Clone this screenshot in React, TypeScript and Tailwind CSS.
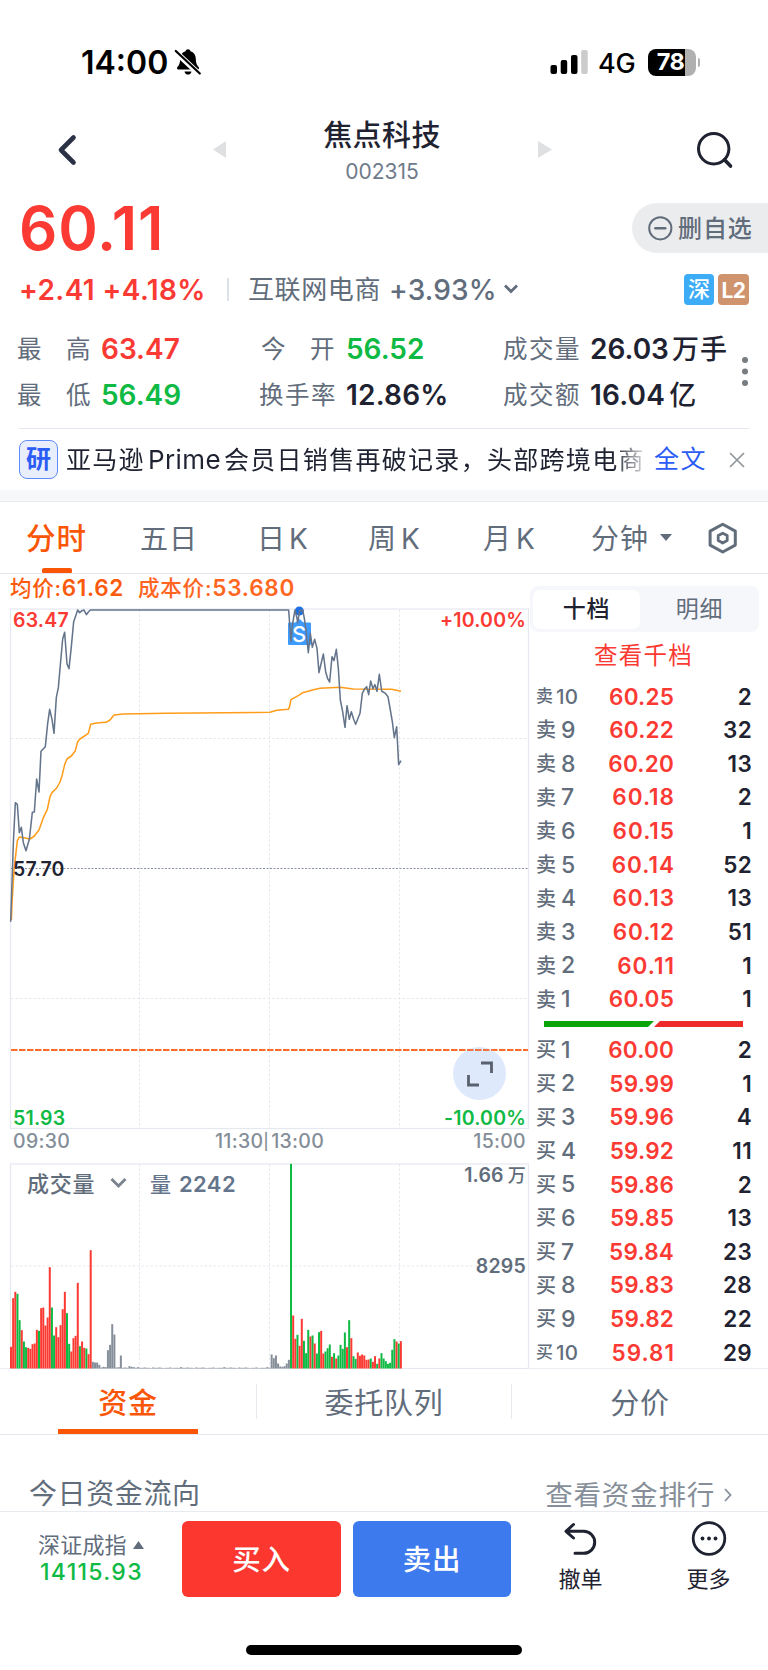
import React from "react";

type Tone = "r" | "g" | "n";

const toneFill: Record<Tone, string> = { r: "#fb3a33", g: "#0fba44", n: "#868f99" };

const openingBars =
  "65r 211r 230r 224g 145g 115r 81g 64g 62r 59r 73r 75r 116r 113g 181r 183r 129r 153r 304r 183g 99g 124r 94r 130r 178r 230r 166g 74g 51r 91r 98r 257r 67g 81r 62r 60g 43r 355r 20n 18n 18n 11n 3n 5n 4n 55n 71n 133n 102n 3n 4n 39n 2n 3n 2n 7n 5n 4n 2n 4n 2n";
const flatBars = "2n 3n 2n 2n 1n 3n 2n 2n 3n 2n 1n 2n 2n 3n 1n 2n 2n 2n 4n 2n";
const afternoonBars =
  "42n 31n 39n 15n 6n 5n 7n 15n 26n 614g 159r 89r 101g 68r 149r 83g 46g 116g 96r 99g 75r 45g 109g 113r 45r 51g 61g 72g 35r 46g 30r 39g 71g 59g 108g 64r 145g 91r 37g 29g 48r 38r 42r 39r 26r 27r 30g 20r 37r 14g 30r 46g 30g 22g 14g 17g 56g 88g 81r 75g 82r";

const bars = [openingBars, flatBars, flatBars, flatBars, afternoonBars]
  .join(" ")
  .split(" ")
  .map((b) => ({ h: parseInt(b, 10) / 3, tone: b.slice(-1) as Tone }));

const pricePoints =
  "32,995 40,760 46,638 52,643 58,728 64,712 70,758 78,782 88,748 97,667 103,666 110,567 117,606 123,484 136,470 143,400 149,358 156,388 162,430 169,322 175,293 181,225 188,147 194,127 201,222 207,236 214,170 221,95 227,78 233,60 239,68 246,62 252,60 259,74 265,66 271,60 866,60 873,155 878,100 885,60 891,85 893,98 899,62 908,60 913,85 918,120 925,188 931,130 937,172 944,148 951,175 957,248 970,192 977,245 983,266 989,276 996,200 1002,212 1009,178 1015,235 1021,330 1028,365 1035,412 1041,347 1048,388 1054,365 1061,388 1067,403 1080,370 1087,310 1093,298 1100,290 1106,314 1112,273 1119,296 1125,284 1131,304 1138,253 1145,303 1157,311 1164,320 1171,360 1177,395 1183,443 1190,410 1196,524 1203,512";
const averagePoints =
  "34,990 36,940 42,840 52,752 58,741 75,744 90,747 103,738 117,720 130,683 142,658 150,620 156,608 170,594 180,576 187,554 194,524 201,507 214,498 226,482 233,455 240,447 265,430 272,403 290,399 318,397 330,390 342,375 370,372 500,370 810,367 830,361 865,358 868,352 873,329 900,314 908,308 940,299 960,295 1020,292 1060,297 1175,298 1203,304";

const sells: [string, string, string][] = [
  ["10", "60.25", "2"],
  ["9", "60.22", "32"],
  ["8", "60.20", "13"],
  ["7", "60.18", "2"],
  ["6", "60.15", "1"],
  ["5", "60.14", "52"],
  ["4", "60.13", "13"],
  ["3", "60.12", "51"],
  ["2", "60.11", "1"],
  ["1", "60.05", "1"],
];
const buys: [string, string, string][] = [
  ["1", "60.00", "2"],
  ["2", "59.99", "1"],
  ["3", "59.96", "4"],
  ["4", "59.92", "11"],
  ["5", "59.86", "2"],
  ["6", "59.85", "13"],
  ["7", "59.84", "23"],
  ["8", "59.83", "28"],
  ["9", "59.82", "22"],
  ["10", "59.81", "29"],
];

function StatusBar() {
  return (
    <div className="flex h-[124px] items-center pl-[81px] text-black">
      <span className="w-[93px] pt-[2px] text-[32px] font-semibold">14:00</span>
      <svg className="h-[28px] w-[28px]" viewBox="0 0 28 28">
        <path
          d="M14 1.200c1.300 0 2.200.8 2.500 2 3.400 1 5.300 3.800 5.300 7.600 0 4.500 1.300 6.700 2.800 8.200.9.900.4 2.400-.9 2.400H4.300c-1.300 0-1.800-1.500-.9-2.400C4.900 17.500 6.200 15.300 6.200 10.800c0-3.800 1.900-6.600 5.300-7.600.3-1.200 1.200-2 2.500-2z"
          fill="#000"
        />
        <path d="M10.500 23.400h7c-.3 2-1.700 3.200-3.500 3.200s-3.200-1.200-3.500-3.200z" fill="#000" />
        <path d="M1.200 3.500l24 22.500" stroke="#fff" strokeWidth="5.600" />
        <path d="M1.800 3l24 22.500" stroke="#000" strokeWidth="2.200" strokeLinecap="round" />
      </svg>
      <svg className="ml-[348px] h-[26px] w-[40px]" viewBox="0 0 40 26">
        <rect x="0.500" y="16" width="6.500" height="9" rx="2" />
        <rect x="10.700" y="11" width="6.500" height="14" rx="2" />
        <rect x="21" y="6" width="6.500" height="19" rx="2" />
        <rect x="31.200" y="1" width="6.500" height="24" rx="2" fill="#cbcbcb" />
      </svg>
      <span className="ml-[8px] w-[50px] pt-[3px] text-[27px] font-medium tracking-[-0.300px]">4G</span>
      <div className="flex h-[27px] w-[48px] items-center justify-center rounded-[8px] bg-[linear-gradient(90deg,#000_78%,#b0b0b0_78%)] pr-[3px] text-[23.500px] font-bold tracking-[-0.500px] text-white">
        78
      </div>
      <div className="ml-[2px] h-[9px] w-[2px] rounded-r-full bg-[#b0b0b0]" />
    </div>
  );
}

function Header() {
  return (
    <div className="flex h-[76px] items-start">
      <svg className="ml-[55px] mt-[8px] h-[36px] w-[26px]" viewBox="0 0 26 36" fill="none">
        <path d="M18.500 5.500L6 18l12.500 12.500" stroke="#2b3245" strokeWidth="4.600" strokeLinecap="round" strokeLinejoin="round" />
      </svg>
      <svg className="ml-[132px] mt-[17px] h-[17px] w-[13px]" viewBox="0 0 13 17">
        <path d="M13 0v17L0 8.500z" fill="#dfe0e2" />
      </svg>
      <div className="flex w-[312px] flex-col items-center">
        <span className="mt-[-3px] h-[29px] text-[29px] font-medium leading-[29px] tracking-[0.400px] text-[#1f2331]">焦点科技</span>
        <span className="mt-[11px] text-[21px] leading-[22px] text-[#6f7b8b]">002315</span>
      </div>
      <svg className="mt-[17px] h-[17px] w-[14px]" viewBox="0 0 14 17">
        <path d="M0 0v17L14 8.500z" fill="#dfe0e2" />
      </svg>
      <svg className="ml-[143px] mt-[6px] h-[40px] w-[40px]" viewBox="0 0 40 40" fill="none" stroke="#1f2331" strokeWidth="3">
        <circle cx="18.700" cy="18.700" r="15.200" />
        <path d="M29.500 29.800l6 6.300" strokeWidth="3.600" strokeLinecap="round" />
      </svg>
    </div>
  );
}

function Quote() {
  return (
    <div>
      <div className="flex h-[56px] items-center justify-between pl-[19px]">
        <span className="text-[60px] font-semibold leading-none tracking-[0.900px] text-[#fb3a33]">60.11</span>
        <div className="flex h-[50px] w-[136px] items-center rounded-l-full bg-[#ebecee] pl-[16px]">
          <svg className="h-[25px] w-[25px]" viewBox="0 0 25 25" fill="none" stroke="#626d7c" strokeWidth="2">
            <circle cx="12.300" cy="12.300" r="11.100" />
            <path d="M7.300 12.300h10" strokeWidth="2.400" strokeLinecap="round" />
          </svg>
          <span className="ml-[5px] whitespace-nowrap pt-[2px] text-[24px] font-medium tracking-[0.900px] text-[#626d7c]">删自选</span>
        </div>
      </div>
      <div className="flex h-[66px] items-center pl-[19px] text-[28px] font-medium text-[#626d7c]">
        <span className="w-[208px] whitespace-nowrap pt-[1px] font-semibold tracking-[0.400px] text-[#fb3a33]">+2.41 +4.18%</span>
        <span className="h-[23px] w-[2px] bg-[#dde1e8]" />
        <span className="ml-[19px] w-[141px] whitespace-nowrap pt-[1px] text-[26px] font-normal tracking-[0.600px]">互联网电商</span>
        <span className="w-[114px] pt-[1px] tracking-[0.200px]">+3.93%</span>
        <svg className="h-[12px] w-[16px]" viewBox="0 0 16 12" fill="none">
          <path d="M2 2.500l6 6 6-6" stroke="#626d7c" strokeWidth="2.800" />
        </svg>
        <span className="ml-[165px] flex h-[31px] w-[30px] items-center justify-center rounded-[4px] bg-[#3dacf7] text-[22px] text-white">深</span>
        <span className="ml-[4px] flex h-[31px] w-[31px] items-center justify-center rounded-[4px] bg-[#cf936d] pt-[2px] text-[21px] font-bold tracking-[-0.500px] text-white">L2</span>
      </div>
      <div className="flex h-[106px] pl-[17px]">
        <div className="grid w-[727px] grid-cols-[84px_158px_87px_157px_87px_154px] grid-rows-[46px_46px] pt-[4px] text-[28px] font-semibold text-[#1f2331] [&>span]:flex [&>span]:items-center [&>span]:whitespace-nowrap">
          <Label spaced>最　高</Label>
          <span className="text-[#fb3a33]">63.47</span>
          <Label spaced>
            <i className="pl-[2px] not-italic">今　开</i>
          </Label>
          <span className="text-[#0fba44]">56.52</span>
          <Label>成交量</Label>
          <span>
            26.03<i className="ml-[3px] text-[27px] font-medium not-italic tracking-[1.200px]">万手</i>
          </span>
          <Label spaced>最　低</Label>
          <span className="text-[#0fba44]">56.49</span>
          <Label>换手率</Label>
          <span className="tracking-[0.200px]">12.86%</span>
          <Label>成交额</Label>
          <span className="tracking-[0.200px]">
            16.04<i className="ml-[4px] text-[27px] font-medium not-italic">亿</i>
          </span>
        </div>
        <svg className="mt-[34px] h-[34px] w-[6px] shrink-0" viewBox="0 0 6 34" fill="#777c80" overflow="visible">
          <circle cx="1" cy="4" r="3" />
          <circle cx="1" cy="15.500" r="3" />
          <circle cx="1" cy="27" r="3" />
        </svg>
      </div>
    </div>
  );
}

function Label({ children, spaced }: { children: React.ReactNode; spaced?: boolean }) {
  return (
    <span className={spaced ? "text-[24.500px] font-normal text-[#626d7c]" : "text-[24.500px] font-normal tracking-[1.500px] text-[#626d7c]"}>
      {children}
    </span>
  );
}

function News() {
  return (
    <div>
      <div className="mx-[19px] h-px bg-[#e6e9f0]" />
      <div className="flex h-[61px] items-center pl-[19px]">
        <span className="flex h-[39px] w-[39px] items-center justify-center rounded-[8px] border border-[#5e8bf7] bg-[#e9eefd] text-[25px] font-bold text-[#2b5cf6]">研</span>
        <span className="ml-[8px] w-[580px] overflow-hidden whitespace-nowrap text-[25px] leading-[36px] tracking-[1.300px] text-[#1f2331] [mask-image:linear-gradient(90deg,#000_548px,transparent_584px)]">
          亚马逊<i className="ml-[3px] mr-[3px] text-[26px] not-italic tracking-[0.400px]">Prime</i>会员日销售再破记录，头部跨境电商
        </span>
        <span className="ml-[8px] w-[75px] text-[25px] tracking-[1.500px] text-[#2b5cf6]">全文</span>
        <svg className="h-[16px] w-[16px]" viewBox="0 0 16 16">
          <path d="M1 1l14 14M15 1L1 15" stroke="#8f9499" strokeWidth="1.600" />
        </svg>
      </div>
      <div className="h-[12px] border-b border-[#e9ebf0] bg-[#f7f8fa]" />
    </div>
  );
}

function PeriodTabs() {
  return (
    <div className="flex h-[72px] border-b border-[#e3e6ee] text-[28px] tracking-[1px] text-[#626d7c] [&>span]:flex [&>span]:items-center [&>span]:whitespace-nowrap [&>span]:pt-[2px]">
      <span className="relative w-[113px] pl-[26px] text-[29.500px] font-medium text-[#fb5607]">
        分时
        <b className="absolute bottom-0 left-[42px] h-[5px] w-[30px] rounded-t-[2px] rounded-b-[1px] bg-[#fb5607]" />
      </span>
      <span className="w-[119px] pl-[27px]">五日</span>
      <span className="w-[110px] pl-[25px]">日<i className="pl-[3px] not-italic">K</i></span>
      <span className="w-[115px] pl-[26px]">周<i className="pl-[4px] not-italic">K</i></span>
      <span className="w-[106px] pl-[26px]">月<i className="pl-[4px] not-italic">K</i></span>
      <span className="w-[97px] pl-[28px]">分钟</span>
      <svg className="mt-[32px] h-[7px] w-[12px]" viewBox="0 0 12 7">
        <path d="M0 0h12L6 7z" fill="#626d7c" />
      </svg>
      <svg className="ml-[35px] mt-[19px] h-[34px] w-[32px]" viewBox="0 0 32 34" fill="none" stroke="#626d7c" strokeWidth="3" strokeLinejoin="round">
        <path d="M15.700 3.200l12.600 6.900v14l-12.600 6.900L3.100 24.100v-14z" />
        <path d="M15.700 12.200l4.500 2.400v5l-4.500 2.400-4.500-2.400v-5z" strokeWidth="2.800" />
      </svg>
    </div>
  );
}

function PriceChart() {
  return (
    <div className="relative h-[530px] w-[530px] text-[19.500px] font-semibold leading-[20px] tracking-[0.200px]">
      <svg className="block h-[530px] w-[530px]" viewBox="0 600 530 530" fill="none">
        <rect x="10.500" y="609" width="518" height="519.500" stroke="#e6e8f1" strokeWidth="1.200" />
        <path d="M139.500 610v518M269.500 610v518M399.500 610v518M11 738.500h517M11 998.500h517" stroke="#e6e8ee" strokeWidth="1" strokeDasharray="2.500 2" />
        <path d="M11 868.500h517" stroke="#8791a0" strokeWidth="1.200" strokeDasharray="2 1.500" />
        <path d="M11 1050h517" stroke="#ff6b28" strokeWidth="2" strokeDasharray="6.500 1.500" />
        <rect x="288" y="622.500" width="23" height="22.500" rx="1" fill="#3d9bff" />
        <path d="M295 623l4.500-4 4.500 4z" fill="#3d9bff" />
        <circle cx="299.300" cy="611" r="4.500" fill="#1e70e6" />
        <g transform="translate(0 590) scale(0.33333)" strokeLinejoin="round">
          <polyline points={averagePoints} stroke="#ff9c1a" strokeWidth="4.600" />
          <polyline points={pricePoints} stroke="#64748b" strokeWidth="4.600" />
        </g>
        <circle cx="479.500" cy="1073.500" r="26.500" fill="#dfe9fc" />
        <path d="M467 1050h25" stroke="#f2733f" strokeWidth="2" strokeDasharray="6.500 1.500" />
        <path d="M481 1063h10.500v10M468.500 1075v10H479" stroke="#59616e" strokeWidth="2.800" />
      </svg>
      <span className="absolute left-[13px] top-[10px] text-[#fb3a33]">63.47</span>
      <span className="absolute right-[4px] top-[10px] text-[#fb3a33]">+10.00%</span>
      <span className="absolute left-[13px] top-[259px] text-[#1f2331]">57.70</span>
      <span className="absolute bottom-[2px] left-[13px] text-[#0fba44]">51.93</span>
      <span className="absolute bottom-[2px] right-[4px] text-[#0fba44]">-10.00%</span>
      <span className="absolute left-[292px] top-[24px] text-[22px] font-medium text-white">S</span>
    </div>
  );
}

function VolumeChart() {
  return (
    <div className="relative h-[209px] w-[530px] font-medium text-[#626d7c]">
      <svg className="block h-[209px] w-[530px]" viewBox="0 1160 530 209" fill="none">
        <path d="M139.500 1164v204M269.500 1164v204M399.500 1164v204M11 1266h517" stroke="#e6e8ee" strokeWidth="1" strokeDasharray="2.500 2" />
        <rect x="10.500" y="1164" width="518" height="204.500" stroke="#e6e8f1" strokeWidth="1.200" />
        {bars.map((b, i) => (
          <rect key={i} x={10 + i * 2.154} y={1368.500 - b.h} width={2} height={b.h} fill={toneFill[b.tone]} />
        ))}
      </svg>
      <div className="absolute left-[27px] top-[10px] flex h-[26px] items-center">
        <span className="w-[83px] whitespace-nowrap pt-[1px] text-[22px] tracking-[0.700px]">成交量</span>
        <svg className="h-[12px] w-[17px]" viewBox="0 0 17 12" fill="none">
          <path d="M1.500 2l7 7 7-7" stroke="#7b858f" strokeWidth="3" />
        </svg>
        <span className="ml-[23px] whitespace-nowrap pt-[1px] text-[21px] text-[#64748b]">
          量<i className="ml-[8px] text-[22px] font-semibold not-italic tracking-[0.400px]">2242</i>
        </span>
      </div>
      <span className="absolute right-[4px] top-[5px] whitespace-nowrap text-[19.500px] font-semibold leading-[20px] tracking-[0.200px]">
        1.66<i className="ml-[4px] text-[18px] font-medium not-italic">万</i>
      </span>
      <span className="absolute right-[4px] top-[96px] text-[19.500px] font-semibold leading-[20px] tracking-[0.200px]">8295</span>
    </div>
  );
}

function DepthRow({ side, row }: { side: string; row: [string, string, string] }) {
  const small = row[0] === "10";
  const narrow = row[1].includes("1");
  return (
    <div className="flex h-[33.650px] items-center text-[22.500px] font-semibold">
      <span className={small ? "flex w-[59px] items-center text-[17px] font-medium text-[#626d7c]" : "flex w-[59px] items-center text-[20px] font-medium text-[#626d7c]"}>
        {side}
        <i className={small ? "ml-[3px] text-[20.500px] not-italic tracking-[0.300px]" : "ml-[5px] text-[23px] not-italic"}>{row[0]}</i>
      </span>
      <span className={narrow ? "w-[80px] text-right tracking-[1px] text-[#fb3a33]" : "w-[80px] pr-px text-right tracking-[0.200px] text-[#fb3a33]"}>{row[1]}</span>
      <span className="w-[77px] text-right tracking-[0.300px] text-[#1f2331]">{row[2]}</span>
    </div>
  );
}

function OrderBook() {
  return (
    <div className="w-[238px] pt-[12px]">
      <div className="flex h-[46px] w-[229px] items-center rounded-[8px] bg-[#f6f7fa] p-[3px] text-[23px] tracking-[0.800px]">
        <span className="flex h-[39px] w-[107px] items-center justify-center rounded-[7px] bg-white pt-[1px] font-medium text-[#1f2331]">十档</span>
        <span className="flex flex-1 items-center justify-center pl-[3px] pt-[1px] text-[#626d7c]">明细</span>
      </div>
      <div className="flex h-[48px] items-center justify-center pr-[11px] text-[23.500px] tracking-[1.200px] text-[#fb3a33]">查看千档</div>
      <div className="pl-[6px]">
        {sells.map((r) => (
          <DepthRow key={r[0]} side="卖" row={r} />
        ))}
        <svg className="mb-[6px] ml-[8px] mt-[5px] block h-[6px] w-[199px]" viewBox="0 0 199 6">
          <path d="M0 0h110l-6 6H0z" fill="#0aa50a" />
          <path d="M116 0h83v6h-89z" fill="#ed2b28" />
        </svg>
        {buys.map((r) => (
          <DepthRow key={r[0]} side="买" row={r} />
        ))}
      </div>
    </div>
  );
}

function ChartArea() {
  return (
    <div className="flex h-[795px] border-b border-[#eceef3]">
      <div className="w-[530px]">
        <div className="flex h-[26px] items-center whitespace-nowrap pl-[10px] pt-[3px] text-[21.500px] font-medium tracking-[0.700px] text-[#fb5a0c]">
          <span className="w-[128px]">均价:<b className="text-[22.500px] font-semibold">61.62</b></span>
          <span className="tracking-[0.800px] text-[#ff661f]">成本价:<b className="text-[22.500px] font-semibold">53.680</b></span>
        </div>
        <PriceChart />
        <div className="flex h-[30px] items-start justify-between pl-[13px] pr-[4px] pt-[1px] text-[19.500px] font-medium leading-[20px] tracking-[0.300px] text-[#848e98]">
          <span className="w-[80px]">09:30</span>
          <span className="flex items-center">
            11:30<i className="mr-[2px] text-[16px] not-italic">|</i>13:00
          </span>
          <span className="w-[80px] text-right">15:00</span>
        </div>
        <VolumeChart />
      </div>
      <OrderBook />
    </div>
  );
}

function FundTabs() {
  return (
    <div>
      <div className="grid h-[66px] grid-cols-3 border-b border-[#e3e7ee] text-[29px] tracking-[0.700px] text-[#626d7c] [&>span]:flex [&>span]:items-center [&>span]:justify-center">
        <span className="relative pt-[3px] font-medium text-[#fb5607]">
          资金
          <b className="absolute bottom-0 left-[58px] h-[5px] w-[140px] bg-[#fb5607]" />
        </span>
        <span className="my-[15px] border-x border-[#e6e9ee] pt-[3px]">委托队列</span>
        <span className="pt-[3px]">分价</span>
      </div>
      <div className="flex h-[77px] items-end justify-between border-b border-[#e9ebf0] pl-[29px] pr-[36px]">
        <span className="text-[28px] leading-[34px] tracking-[0.600px] text-[#626d7c]">今日资金流向</span>
        <span className="flex items-center text-[27.500px] leading-[32px] tracking-[0.800px] text-[#868f99]">
          查看资金排行
          <svg className="ml-[9px] h-[14px] w-[8px]" viewBox="0 0 8 14" fill="none">
            <path d="M1 1l5.500 6L1 13" stroke="#868f99" strokeWidth="1.800" />
          </svg>
        </span>
      </div>
    </div>
  );
}

function TradeBar() {
  return (
    <div className="flex h-[124px] items-start pt-[9px]">
      <div className="w-[182px] pl-[38px] pt-[11px]">
        <div className="flex h-[25px] items-center whitespace-nowrap text-[22px] tracking-[0.200px] text-[#626d7c]">
          深证成指
          <svg className="ml-[6px] h-[8px] w-[11px]" viewBox="0 0 11 8">
            <path d="M5.500 0L11 8H0z" fill="#626d7c" />
          </svg>
        </div>
        <div className="mt-[3px] pl-[2px] text-[23px] font-medium leading-[24px] tracking-[1.300px] text-[#0fba44]">14115.93</div>
      </div>
      <button className="h-[76px] w-[159px] rounded-[6px] bg-[#fb3730] pt-[2px] text-[28.500px] font-medium tracking-[0.800px] text-white">买入</button>
      <button className="ml-[12px] h-[76px] w-[158px] rounded-[6px] bg-[#3d7aee] pt-[2px] text-[28.500px] font-medium tracking-[0.800px] text-white">卖出</button>
      <div className="ml-[47px] flex w-[45px] flex-col items-center text-[#1f2331]">
        <svg className="h-[36px] w-[36px]" viewBox="0 0 36 36" fill="none" stroke="#1f2331" strokeWidth="3" strokeLinecap="round" strokeLinejoin="round">
          <path d="M10.500 3.500L3 10.300l7.500 6.700M3.500 10.300h17.200a11 11 0 0 1 0 22H12" />
        </svg>
        <span className="mt-[10px] whitespace-nowrap text-[22px] leading-[24px]">撤单</span>
      </div>
      <div className="ml-[83px] flex w-[45px] flex-col items-center text-[#1f2331]">
        <svg className="h-[36px] w-[36px]" viewBox="0 0 36 36" fill="#1f2331">
          <circle cx="18" cy="17.500" r="15.800" fill="none" stroke="#1f2331" strokeWidth="2.800" />
          <circle cx="11.500" cy="17.500" r="1.900" />
          <circle cx="18" cy="17.500" r="1.900" />
          <circle cx="24.500" cy="17.500" r="1.900" />
        </svg>
        <span className="mt-[10px] whitespace-nowrap text-[22px] leading-[24px]">更多</span>
      </div>
    </div>
  );
}

export default function App() {
  return (
    <div className="h-[1670px] w-[768px] overflow-hidden bg-white font-['Inter','Noto_Sans_CJK_SC',sans-serif] leading-none">
      <StatusBar />
      <Header />
      <Quote />
      <News />
      <PeriodTabs />
      <ChartArea />
      <FundTabs />
      <TradeBar />
      <div className="mx-auto mt-[9px] h-[10px] w-[276px] rounded-full bg-black" />
    </div>
  );
}
